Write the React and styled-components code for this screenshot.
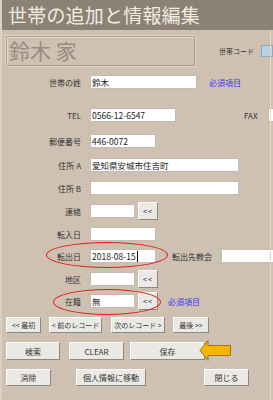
import styled, { createGlobalStyle } from "styled-components";

const GlobalStyle = createGlobalStyle`
	body {
		margin: 0;
		background: #cec1b2;
	}
`;

const font = `"Noto Sans CJK JP", "Liberation Sans", sans-serif`;

export default function App() {
	return (
		<Page>
			<GlobalStyle />
			<TitleBar>世帯の追加と情報編集</TitleBar>
			<NameRow>
				<NameBox>鈴木 家</NameBox>
				<CodeLabel>世帯コード</CodeLabel>
				<CodeField />
			</NameRow>

			<Row $mt={5}>
				<Label>世帯の姓</Label>
				<Field $w={107}>鈴木</Field>
				<Required $ml={12}>必須項目</Required>
			</Row>
			<Row $mt={11}>
				<Label>TEL</Label>
				<Field $w={86}>0566-12-6547</Field>
				<SideLabel $ml={68}>FAX</SideLabel>
				<Field $w={10} $ml={10} />
			</Row>
			<Row $mt={4}>
				<Label>郵便番号</Label>
				<Field $w={66}>446-0072</Field>
			</Row>
			<Row $mt={2}>
				<Label>住所 A</Label>
				<Field $w={149}>愛知県安城市住吉町</Field>
			</Row>
			<Row $mt={1}>
				<Label>住所 B</Label>
				<Field $w={149} />
			</Row>
			<Row $mt={1}>
				<Label>連絡</Label>
				<Field $w={45} />
				<SmallButton>&lt;&lt;</SmallButton>
			</Row>
			<Row $mt={1}>
				<Label>転入日</Label>
				<Field $w={66} />
			</Row>
			<Row $mt={0}>
				<Label>転出日</Label>
				<Field $w={66}>
					2018-08-15<Caret />
				</Field>
				<SideLabel $ml={16}>転出先教会</SideLabel>
				<Field $w={60} $ml={9} />
			</Row>
			<Row $mt={1}>
				<Label>地区</Label>
				<Field $w={45} />
				<SmallButton>&lt;&lt;</SmallButton>
			</Row>
			<Row $mt={0}>
				<Label>在籍</Label>
				<Field $w={45}>無</Field>
				<SmallButton>&lt;&lt;</SmallButton>
				<Required $ml={10}>必須項目</Required>
			</Row>

			<ButtonRow $mt={5}>
				<Button $w={35} $h={16} $fs={7}>&lt;&lt; 最初</Button>
				<Button $w={53} $h={16} $ml={8} $fs={7}>&lt; 前のレコード</Button>
				<Button $w={54} $h={16} $ml={9} $fs={7}>次のレコード &gt;</Button>
				<Button $w={36} $h={16} $ml={8} $fs={7}>最後 &gt;&gt;</Button>
			</ButtonRow>
			<ButtonRow $mt={9}>
				<Button $w={54} $h={18}>検索</Button>
				<Button $w={55} $h={18} $ml={9}>CLEAR</Button>
				<Button $w={75} $h={18} $ml={6}>保存</Button>
			</ButtonRow>
			<ButtonRow $mt={9}>
				<Button $w={45} $h={17}>消除</Button>
				<Button $w={70} $h={17} $ml={25}>個人情報に移動</Button>
				<Button $w={45} $h={17} $ml={58}>閉じる</Button>
			</ButtonRow>

			<Ellipse style={{ left: 46, top: 242, width: 122, height: 26 }} />
			<Ellipse style={{ left: 53, top: 289, width: 108, height: 26 }} />
			<Arrow width="33" height="24" viewBox="0 0 33 24">
				<path
					d="M1 11.5 L9 1.5 L9 6.5 L31.5 6.5 L31.5 16.5 L9 16.5 L9 21.5 Z"
					fill="#f6b500"
					stroke="#9c7a10"
					strokeWidth="1"
					strokeLinejoin="miter"
				/>
			</Arrow>
			<EdgeLine />
		</Page>
	);
}

const Page = styled.div`
	position: relative;
	width: 273px;
	height: 400px;
	overflow: hidden;
	background: #cec1b2;
	box-shadow: inset 2px 0 0 #dbd0c2;
	font-family: ${font};
	color: #333;
`;

const TitleBar = styled.div`
	margin-left: 2px;
	height: 30px;
	background: #8b8275;
	color: #f2ece2;
	font-size: 19px;
	line-height: 30px;
	padding-left: 6px;
	letter-spacing: 0.2px;
	white-space: nowrap;
`;

const NameRow = styled.div`
	display: flex;
	align-items: center;
	margin-top: 6px;
	padding-left: 6px;
	height: 30px;
`;

const NameBox = styled.div`
	box-sizing: border-box;
	width: 196px;
	height: 30px;
	border: 1px solid #a99f92;
	box-shadow: inset 1px 1px 0 #e3dace, 0 0 0 1px #ddd3c6;
	color: #958c80;
	font-size: 21px;
	line-height: 27px;
	padding-left: 2px;
	white-space: pre;
`;

const CodeLabel = styled.span`
	margin-left: 24px;
	font-size: 7px;
	color: #333;
	white-space: nowrap;
`;

const CodeField = styled.div`
	margin-left: 7px;
	width: 10px;
	height: 10px;
	background: #b9d3e6;
	border: 1px solid #8fa7bb;
	flex-shrink: 0;
`;

const Row = styled.div`
	display: flex;
	align-items: center;
	height: 22px;
	margin-top: ${(p) => p.$mt}px;
	white-space: nowrap;
`;

const Label = styled.span`
	width: 81px;
	margin-right: 9px;
	text-align: right;
	font-size: 8px;
	color: #333;
	flex-shrink: 0;
`;

const SideLabel = styled.span`
	margin-left: ${(p) => p.$ml}px;
	font-size: 8px;
	color: #333;
	flex-shrink: 0;
`;

const Field = styled.div`
	box-sizing: border-box;
	display: flex;
	align-items: center;
	width: ${(p) => p.$w}px;
	height: 14px;
	margin-left: ${(p) => p.$ml || 0}px;
	background: #fff;
	border: 1px solid #c4bcb2;
	padding-left: 1px;
	font-size: 8.5px;
	color: #222;
	flex-shrink: 0;
	overflow: hidden;
`;

const Caret = styled.span`
	display: inline-block;
	width: 1px;
	height: 11px;
	background: #000;
	margin-left: 1px;
`;

const Required = styled.span`
	margin-left: ${(p) => p.$ml}px;
	font-size: 8px;
	color: #3b3bf0;
	flex-shrink: 0;
`;

const SmallButton = styled.div`
	box-sizing: border-box;
	display: flex;
	align-items: center;
	justify-content: center;
	width: 20px;
	height: 18px;
	margin-left: 3px;
	background: #ebe9e6;
	border: 1px solid;
	border-color: #fbfaf8 #8c877f #8c877f #fbfaf8;
	font-size: 7px;
	color: #333;
	letter-spacing: 1px;
	flex-shrink: 0;
`;

const ButtonRow = styled.div`
	display: flex;
	align-items: flex-start;
	padding-left: 6px;
	margin-top: ${(p) => p.$mt}px;
	white-space: nowrap;
`;

const Button = styled.div`
	box-sizing: border-box;
	display: flex;
	align-items: center;
	justify-content: center;
	width: ${(p) => p.$w}px;
	height: ${(p) => p.$h}px;
	margin-left: ${(p) => p.$ml || 0}px;
	background: #ebe9e6;
	border: 1px solid;
	border-color: #fbfaf8 #8c877f #8c877f #fbfaf8;
	font-size: ${(p) => p.$fs || 8}px;
	color: #333;
	flex-shrink: 0;
	overflow: hidden;
`;

const Ellipse = styled.div`
	position: absolute;
	box-sizing: border-box;
	border: 1px solid #e0201c;
	border-radius: 50%;
	pointer-events: none;
`;

const Arrow = styled.svg`
	position: absolute;
	left: 199px;
	top: 339px;
`;

const EdgeLine = styled.div`
	position: absolute;
	left: 270px;
	top: 30px;
	width: 1px;
	height: 370px;
	background: #e2d8cb;
`;
